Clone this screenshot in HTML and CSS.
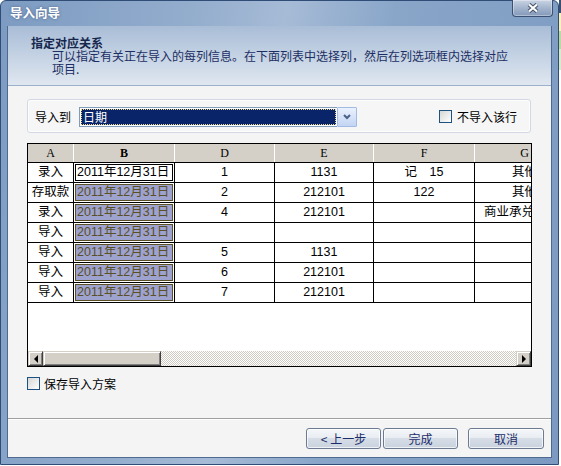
FILE: index.html
```html
<!DOCTYPE html>
<html>
<head>
<meta charset="utf-8">
<link rel="stylesheet" href="styles.css">
</head>
<body>
<div class="screen">
  <div class="window">
    <div class="titlebar">
      <span class="title">导入向导</span>
      <div class="close">
        <svg width="14" height="10" viewBox="0 0 14 10"><path d="M3 1.5 L11 8.5 M11 1.5 L3 8.5" stroke="#46556f" stroke-width="4.2" fill="none"/><path d="M3 1.5 L11 8.5 M11 1.5 L3 8.5" stroke="#fff" stroke-width="2.2" fill="none"/></svg>
      </div>
    </div>
    <div class="frame">
      <div class="client">
        <div class="banner">
          <div class="banner-title">指定对应关系</div>
          <div class="banner-text">可以指定有关正在导入的每列信息。在下面列表中选择列，然后在列选项框内选择对应<br>项目.</div>
        </div>
        <div class="body">
          <div class="groupbox">
            <span class="lbl">导入到</span>
            <div class="combo">
              <div class="combo-val"><span>日期</span></div>
              <div class="combo-btn"><svg width="8" height="6" viewBox="0 0 8 6"><path d="M1 1 L4 4 L7 1" stroke="#4b6188" stroke-width="2" fill="none"/></svg></div>
            </div>
            <div class="check skip"><span class="box"></span><span>不导入该行</span></div>
          </div>
          <div class="grid">
            <div class="row head">
              <div class="c a">A</div><div class="c b">B</div><div class="c d">D</div><div class="c e">E</div><div class="c f">F</div><div class="c g">G</div>
            </div>
            <div class="row">
              <div class="c a">录入</div><div class="c b cur">2011年12月31日</div><div class="c d">1</div><div class="c e">1131</div><div class="c f">记　15</div><div class="c g g-near">其他</div>
            </div>
            <div class="row">
              <div class="c a">存取款</div><div class="c b sel">2011年12月31日</div><div class="c d">2</div><div class="c e">212101</div><div class="c f">122</div><div class="c g g-near">其他</div>
            </div>
            <div class="row">
              <div class="c a">录入</div><div class="c b sel">2011年12月31日</div><div class="c d">4</div><div class="c e">212101</div><div class="c f"></div><div class="c g g-far">商业承兑</div>
            </div>
            <div class="row">
              <div class="c a">导入</div><div class="c b sel">2011年12月31日</div><div class="c d"></div><div class="c e"></div><div class="c f"></div><div class="c g"></div>
            </div>
            <div class="row">
              <div class="c a">导入</div><div class="c b sel">2011年12月31日</div><div class="c d">5</div><div class="c e">1131</div><div class="c f"></div><div class="c g"></div>
            </div>
            <div class="row">
              <div class="c a">导入</div><div class="c b sel">2011年12月31日</div><div class="c d">6</div><div class="c e">212101</div><div class="c f"></div><div class="c g"></div>
            </div>
            <div class="row">
              <div class="c a">导入</div><div class="c b sel">2011年12月31日</div><div class="c d">7</div><div class="c e">212101</div><div class="c f"></div><div class="c g"></div>
            </div>
            <div class="spacer"></div>
            <div class="hscroll">
              <div class="sbtn"><span class="arrow-l"></span></div>
              <div class="sbtn thumb"></div>
              <div class="track"></div>
              <div class="sbtn"><span class="arrow-r"></span></div>
            </div>
          </div>
          <div class="check save"><span class="box"></span><span>保存导入方案</span></div>
        </div>
        <div class="footer">
          <button class="btn">&lt;&nbsp;上一步</button>
          <button class="btn">完成</button>
          <button class="btn cancel">取消</button>
        </div>
      </div>
    </div>
  </div>
  <div class="edge"></div>
</div>
</body>
</html>
```

FILE: styles.css
```css
* { box-sizing: border-box; margin: 0; padding: 0; }
html, body { width: 561px; height: 466px; overflow: hidden; background: #fff; }
body { font-family: "Noto Sans CJK SC", "Liberation Sans", sans-serif; font-size: 12px; color: #000; }

.screen { display: flex; align-items: flex-start; }

.window {
  width: 559px; height: 465px;
  border: 1px solid #2f4d77;
  border-radius: 6px 6px 0 0;
  background: linear-gradient(100deg, #7d9bc2 0%, #93adcd 30%, #a6bbd6 45%, #89a6c9 62%, #7c99c1 100%);
  display: flex; flex-direction: column;
  flex-shrink: 0;
}

.titlebar { height: 25px; display: flex; align-items: flex-start; padding-left: 9px; flex-shrink: 0; }
.title { color: #fff; font-weight: bold; font-size: 12.5px; line-height: 13px; margin-top: 5px; text-shadow: 0 0 3px rgba(40, 60, 100, .6); }
.close {
  margin-left: auto; margin-right: 5px; margin-top: -1px;
  width: 41px; height: 17px;
  border: 1px solid #3b5073; border-top: none;
  border-radius: 0 0 4px 4px;
  background: linear-gradient(#c9d4e4, #a3b4cc 50%, #8399ba);
  box-shadow: inset 0 0 0 1px rgba(255, 255, 255, .35);
  display: flex; align-items: center; justify-content: center;
}

.frame { flex: 1; padding: 0 6px 6px; display: flex; }
.client {
  flex: 1;
  border: 1px solid #4f6a90; border-top: none;
  background: #f4f4f4;
  display: flex; flex-direction: column;
}

.banner {
  height: 60px; flex-shrink: 0;
  border-bottom: 1px solid #9cb0cc;
  background: linear-gradient(#a9bdd7, #dfe7f0);
  padding: 9px 0 0 23px;
}
.banner-title { font-weight: bold; line-height: 15px; color: #16274d; }
.banner-text { padding-left: 21px; line-height: 12.5px; color: #1c2f63; }

.body { height: 332px; flex-shrink: 0; padding: 13px 0 0 19px; }

.groupbox {
  width: 504px; height: 34px;
  border: 1px solid #d3d9e2; border-radius: 3px;
  background: #f6f6f6;
  box-shadow: inset 0 0 0 1px #fdfdfd;
  display: flex; align-items: flex-start;
  padding: 7px 0 0 7px;
}
.lbl { width: 44px; line-height: 20px; }
.combo { width: 278px; height: 20px; display: flex; }
.combo-val { flex: 1; border: 1px solid #7f9db9; border-right: none; background: #fff; padding: 1px; }
.combo-val span {
  display: block; height: 100%;
  background: #0a246a; color: #fff;
  outline: 1px dotted #e8d890; outline-offset: -1px;
  padding-left: 2px; line-height: 16px;
}
.combo-btn {
  width: 20px;
  border: 1px solid #a2bbe4; border-radius: 1px;
  background: linear-gradient(#eaf1fd, #c3d5f3);
  display: flex; align-items: center; justify-content: center;
}

.check { display: flex; align-items: center; line-height: 13px; }
.box { width: 13px; height: 13px; border: 1px solid #1c5180; background: linear-gradient(135deg, #d6d6d6, #fff); margin-right: 5px; }
.skip { margin-left: 82px; margin-top: 3px; }
.save { margin-top: 10px; }
.save .box { margin-right: 4px; }

.grid {
  margin-top: 10px;
  width: 505px; height: 224px;
  border: 1px solid #000;
  background: #fff;
  overflow: hidden;
  display: flex; flex-direction: column;
}
.row {
  display: flex; flex-shrink: 0;
  height: 20px;
  border-bottom: 1px solid #000;
  font-family: "Liberation Sans", "Noto Sans CJK SC", sans-serif;
  font-size: 12.5px;
}
.c {
  flex-shrink: 0;
  border-right: 1px solid #000;
  line-height: 19px;
  text-align: center;
  white-space: nowrap; overflow: hidden;
}
.a { width: 46px; }
.b { width: 101px; text-align: left; padding-left: 3px; }
.d { width: 100px; }
.e { width: 99px; }
.f { width: 101px; }
.g { width: 100px; }
.g-near { text-align: left; padding-left: 37px; }
.g-far { text-align: left; padding-left: 9px; }

.head { height: 19px; background: #d4d0c8; font-family: "Liberation Serif", serif; font-size: 12px; }
.head .c { border-right-color: #fff; line-height: 18px; }
.head .b { text-align: center; padding-left: 0; font-weight: bold; }

.row .sel { background: #9ea2cf; color: #5a5026; box-shadow: inset 0 0 0 1px #fff, inset 0 0 0 2px #5a5026; }
.row .cur { background: #fff; color: #000; box-shadow: inset 0 0 0 1px #fff, inset 0 0 0 2px #000; }

.spacer { flex: 1; }

.hscroll { height: 15px; display: flex; flex-shrink: 0; }
.sbtn {
  width: 15px; height: 15px; flex-shrink: 0;
  background: #d4d0c8;
  border: 1px solid; border-color: #d4d0c8 #404040 #404040 #d4d0c8;
  box-shadow: inset 1px 1px #fff, inset -1px -1px #808080;
  display: flex; align-items: center; justify-content: center;
}
.thumb { width: 118px; }
.track { flex: 1; background: repeating-conic-gradient(#fff 0 25%, #cfcbc3 0 50%) 0 0 / 2px 2px; }
.arrow-l { width: 0; height: 0; border-style: solid; border-width: 4px 4px 4px 0; border-color: transparent #000 transparent transparent; }
.arrow-r { width: 0; height: 0; border-style: solid; border-width: 4px 0 4px 4px; border-color: transparent transparent transparent #000; }

.footer {
  height: 39px; flex-shrink: 0;
  border-top: 1px solid #a0a0a0;
  box-shadow: inset 0 1px #fff;
  display: flex; justify-content: flex-end; align-items: flex-start;
  padding: 9px 7px 0 0;
}
.btn {
  width: 75px; height: 21px;
  font: inherit; color: #1c2e6a;
  border: 1px solid #6d7b92; border-radius: 3px;
  background: linear-gradient(#f4f6f9 0%, #e9edf2 45%, #d6dde7 50%, #c9d2de 100%);
  box-shadow: inset 0 0 0 1px rgba(255, 255, 255, .7);
  line-height: 17px;
}
.btn + .btn { margin-left: 2px; }
.btn.cancel { margin-left: 10px; width: 76px; }

.edge {
  width: 2px; height: 466px; flex-shrink: 0;
  background: linear-gradient(#3a5070 0 13px, #fbf3b4 13px 31px, #b9dc9c 31px 49px, #d8ecc8 49px 70px, #fff 70px);
}
```
